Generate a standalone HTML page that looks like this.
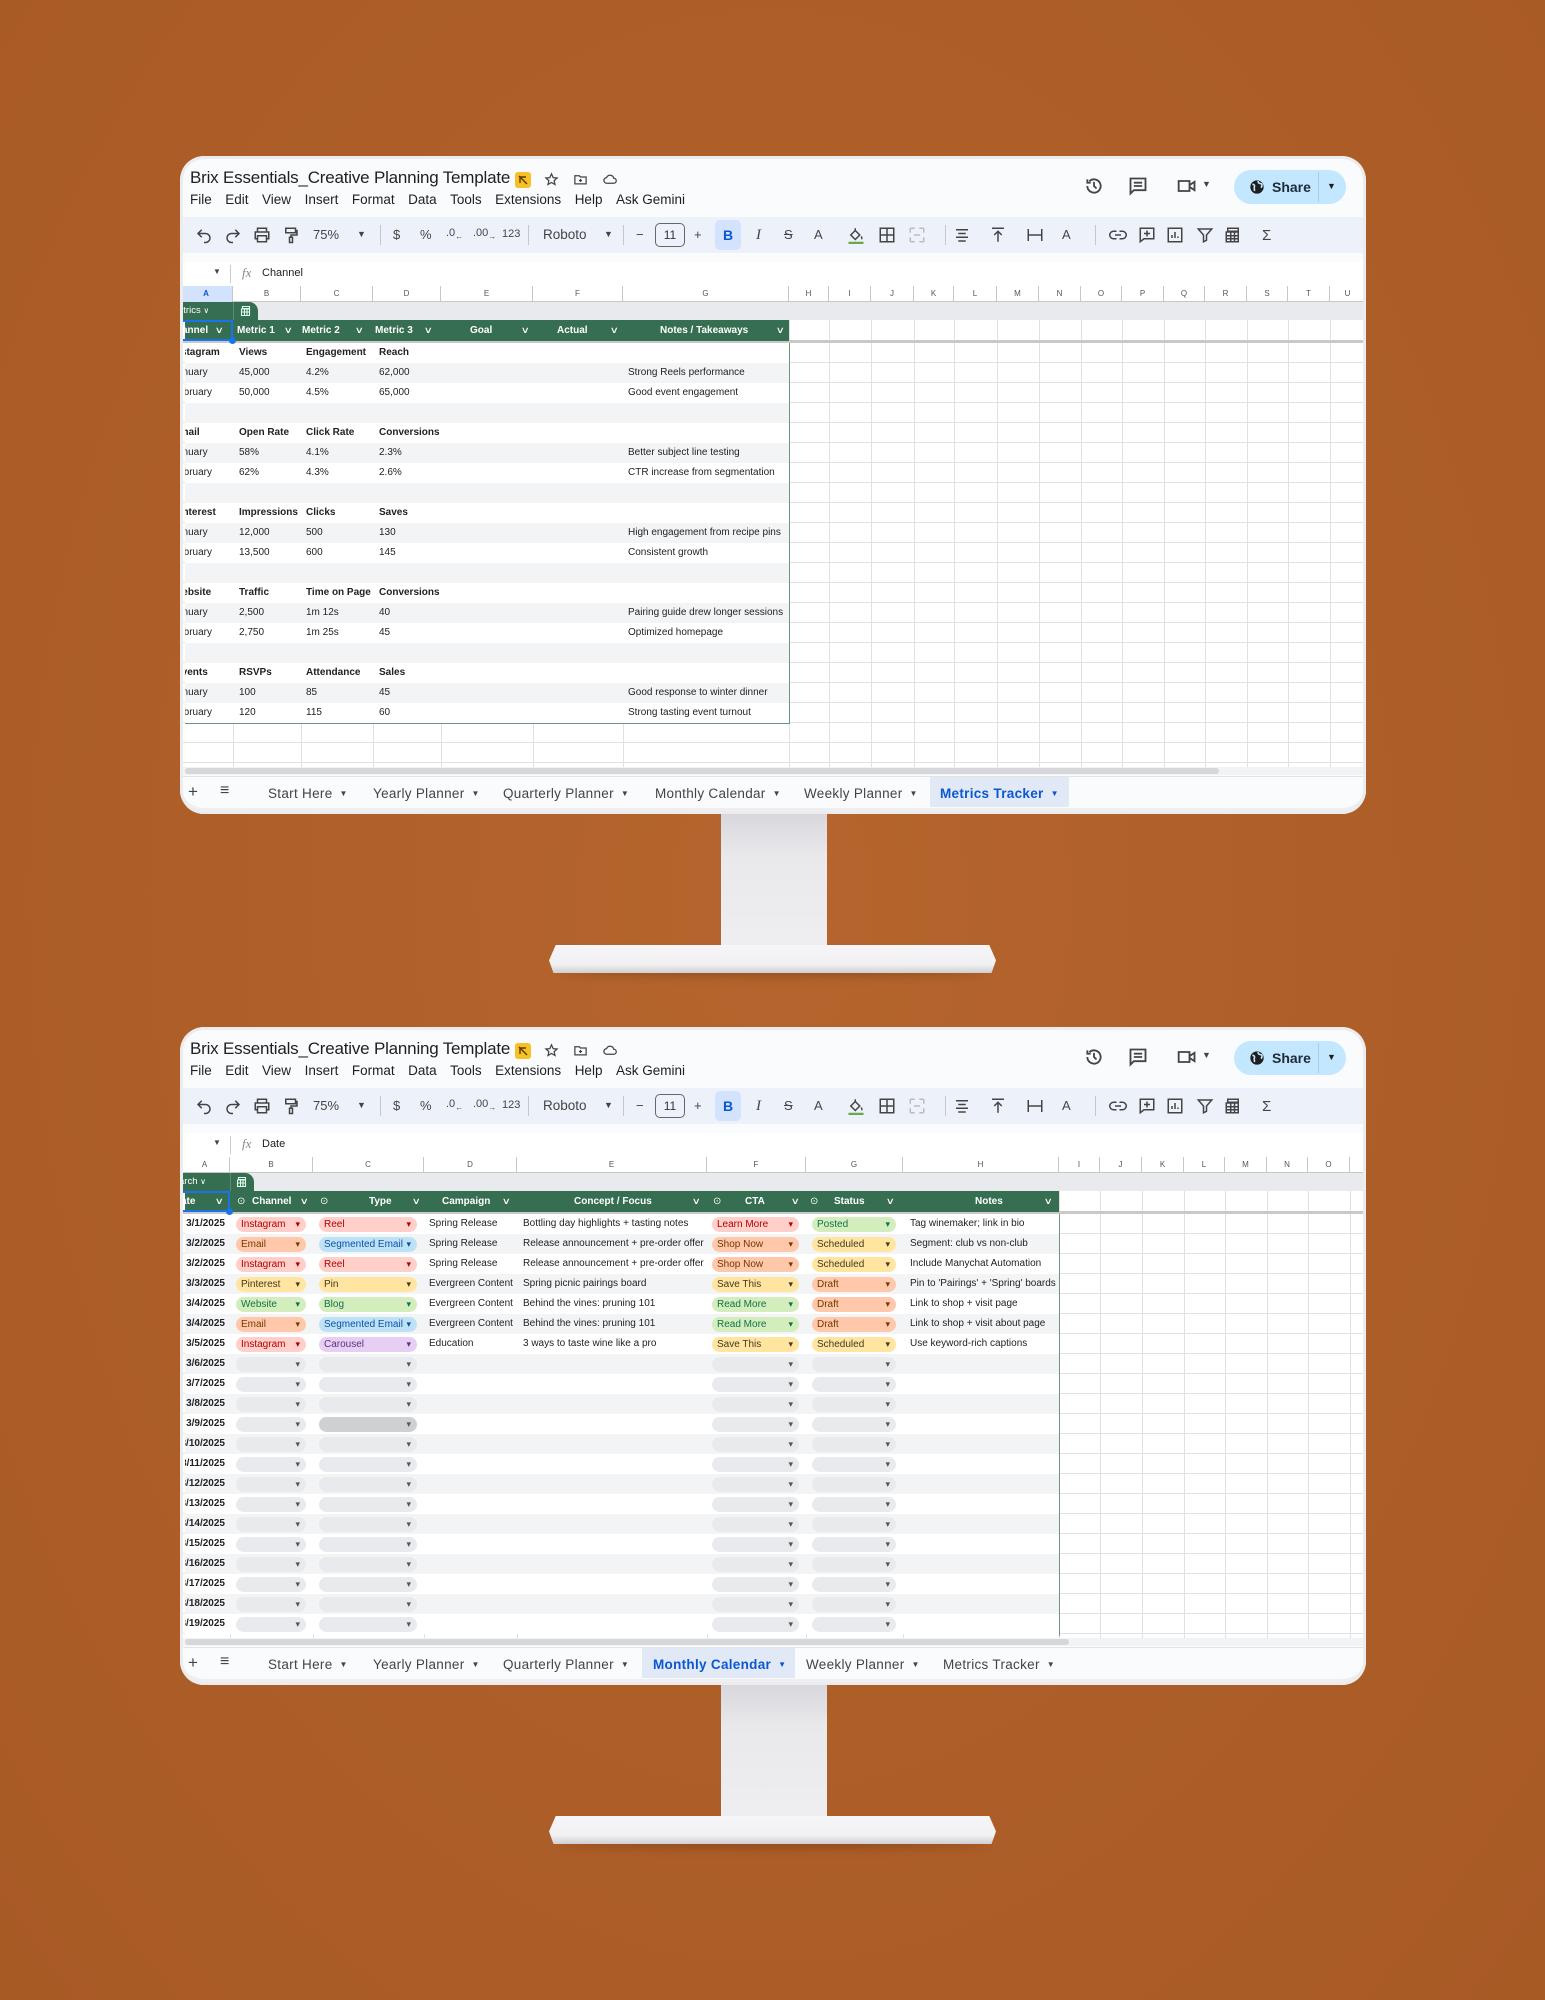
<!DOCTYPE html>
<html><head><meta charset="utf-8"><style>
*{box-sizing:border-box;margin:0;padding:0}
body{width:1545px;height:2000px;background:#b0612a;position:relative;overflow:hidden;font-family:"Liberation Sans",Arial,sans-serif;color:#1f1f1f}
.bgg{position:absolute;inset:0;background:radial-gradient(ellipse at 50% 45%,#b5652c 0%,#ad5e28 60%,#a85a25 100%)}
.m{position:absolute;left:180px;width:1186px;height:658px;background:#f9fbfd;border-radius:24px;overflow:hidden}
.m::after{content:"";position:absolute;inset:0;border-radius:24px;box-shadow:inset 0 0 0 3px #ececef,inset 0 -6px 0 #efeff1;pointer-events:none;z-index:50}
.ab{position:absolute}
.title{left:10px;top:12px;font-size:17px;color:#1f1f1f;letter-spacing:-.2px}
.menu{left:10px;top:36px;font-size:13.5px;color:#1f1f1f;display:flex;gap:13.5px}
.tb{left:0;right:0;top:61px;height:36px;background:#edf2fa}
.ti{position:absolute;top:9px;width:18px;height:18px}
.tt{position:absolute;top:10px;font-size:13px;color:#444}
svg{overflow:visible}
.fx{top:106px;left:0;right:0;height:24px;background:#fff}
.ch{top:130px;left:0;right:0;height:16px;background:#fff;border-bottom:1px solid #c7c7c7}
.cl{position:absolute;top:0;height:16px;font-size:8px;line-height:16px;text-align:center;color:#555;border-right:1px solid #c7c7c7}
.band{top:146px;left:0;right:0;height:18px;background:#e9eaee}
.grid{top:164px;left:0;right:0;height:447px;background:#fff}
.vl{position:absolute;top:130px;width:1px;height:481px;background:#e1e1e1}
.frz{top:184px;left:0;right:0;height:3px;background:#c9c9c9}
.gh{top:164px;height:21px;background:#356e51;color:#fff;font-size:10px;font-weight:bold;line-height:21px}
.gh span{position:absolute;top:0}
.gh i{position:absolute;top:0;font-style:normal;font-weight:normal;font-size:9px;transform:scaleX(1.4)}
.tbl{left:5px;top:187px;overflow:hidden}
.r{position:absolute;left:0;height:20px;line-height:20px;font-size:10px;color:#222;white-space:nowrap}
.r span{position:absolute;top:0}
.r.o{background:#f3f4f6}
.r.w{background:#fff}
.bd{font-weight:bold}
.sb{top:611px;left:0;right:0;height:8px;background:#f1f3f4}
.sbt{position:absolute;top:1px;height:6px;background:#d5d7da;border-radius:3px}
.tabs{top:620px;left:0;right:0;height:38px;background:#f9fbfd;border-top:1px solid #e3e3e3}
.tab{position:absolute;top:9px;font-size:13.5px;color:#444;letter-spacing:.3px;white-space:nowrap}
.tab b{font-size:8px;margin-left:7px;font-weight:normal;position:relative;top:-2px}
.act{position:absolute;top:0;height:30px;background:#e1e9f7}
.chip{position:absolute;top:2.5px;height:15px;line-height:15px;border-radius:8px;padding-left:5px;font-size:10px}
.chip::after{content:"▾";position:absolute;right:6px;top:0;font-size:9px}
.cr{background:#ffcfc9;color:#b10202}.co{background:#ffc8aa;color:#753800}.cy{background:#ffe5a0;color:#473821}
.cg{background:#d4edbc;color:#11734b}.cb{background:#bfe1f6;color:#0a53a8}.cp{background:#e6cff2;color:#5a3286}
.ce{background:#e8eaed;color:#555}
.neck{position:absolute;width:106px;background:linear-gradient(to bottom,#d6d6dc 0%,#e9e9ec 30%,#efeff1 100%)}
.base{position:absolute;left:549px;width:447px;height:28px;background:linear-gradient(#f6f6f8,#f1f1f3 70%,#cfcfd3 100%);clip-path:polygon(1.5% 0,98.5% 0,100% 55%,99% 100%,1% 100%,0 55%);border-radius:4px}
.bsh{position:absolute;left:560px;width:425px;height:10px;background:rgba(80,35,5,.35);filter:blur(5px);border-radius:50%}
</style></head><body>
<div class="bgg"></div>

<div class="bsh" style="top:966px"></div>
<div class="neck" style="left:721px;top:812px;height:146px"></div>
<div class="base" style="top:945px"></div>
<div class="bsh" style="top:1838px"></div>
<div class="neck" style="left:721px;top:1683px;height:146px"></div>
<div class="base" style="top:1816px"></div>

<!-- ================= MONITOR 1 ================= -->
<div class="m" style="top:156px">
 <div class="ab title">Brix Essentials_Creative Planning Template</div>
 <div class="ab" style="left:335px;top:16px;width:16px;height:16px;background:#f6c026;border-radius:3px"><svg width="16" height="16" viewBox="0 0 16 16"><path d="M4 4l8 8M5 11V5h6" stroke="#5a3b00" stroke-width="1.4" fill="none"/></svg></div>
 <svg class="ab" style="left:364px;top:16px" width="15" height="15" viewBox="0 0 24 24"><path d="M12 3l2.7 6 6.3.6-4.8 4.2 1.4 6.2L12 16.8 6.4 20l1.4-6.2L3 9.6l6.3-.6z" fill="none" stroke="#444" stroke-width="2"/></svg>
 <svg class="ab" style="left:393px;top:16px" width="15" height="15" viewBox="0 0 24 24"><path d="M3 6h7l2 2h9v11H3zM12 11v5M9.5 13.5h5" fill="none" stroke="#444" stroke-width="2"/></svg>
 <svg class="ab" style="left:422px;top:16px" width="16" height="15" viewBox="0 0 24 24"><path d="M7 18h11a4 4 0 000-8 6 6 0 00-11.5-1A4.5 4.5 0 007 18z" fill="none" stroke="#444" stroke-width="2"/></svg>
 <div class="ab menu"><span>File</span><span>Edit</span><span>View</span><span>Insert</span><span>Format</span><span>Data</span><span>Tools</span><span>Extensions</span><span>Help</span><span>Ask Gemini</span></div>
 <svg class="ab" style="left:904px;top:20px" width="20" height="20" viewBox="0 0 24 24"><path d="M4 12a8 8 0 102.5-5.8M4 4v4h4M12 7v5l3 3" fill="none" stroke="#444" stroke-width="2.2"/></svg>
 <svg class="ab" style="left:948px;top:20px" width="20" height="20" viewBox="0 0 24 24"><path d="M3 3h18v14H7l-4 4zM7 8h10M7 12h10" fill="none" stroke="#444" stroke-width="2.2"/></svg>
 <svg class="ab" style="left:997px;top:21px" width="20" height="18" viewBox="0 0 24 20"><path d="M2 4h13v12H2zM15 9l6-4v10l-6-4" fill="none" stroke="#444" stroke-width="2.2"/></svg>
 <div class="ab" style="left:1022px;top:23px;font-size:9px;color:#444">▼</div>
 <div class="ab" style="left:1054px;top:14px;width:112px;height:34px;background:#c2e7ff;border-radius:17px">
  <svg class="ab" style="left:15px;top:9px" width="16" height="16" viewBox="0 0 24 24"><circle cx="12" cy="12" r="10" fill="#1f1f1f"/><path d="M5 8c3 0 4 2 3 4s1 4 0 6M14 3c-1 3 2 4 4 4s2 4 0 6" stroke="#c2e7ff" stroke-width="2.5" fill="none"/></svg>
  <div class="ab" style="left:38px;top:9px;font-size:14px;font-weight:bold;color:#1f2a3a">Share</div>
  <div class="ab" style="left:84px;top:2px;width:1px;height:30px;background:#a9cde6"></div>
  <div class="ab" style="left:93px;top:11px;font-size:9px">▼</div>
 </div>
 <div class="ab tb">
  <svg class="ti" style="left:15px" viewBox="0 0 24 24"><path d="M9 15L4 10l5-5M4 10h10a6 6 0 010 12h-2" fill="none" stroke="#444" stroke-width="2"/></svg>
  <svg class="ti" style="left:44px" viewBox="0 0 24 24"><path d="M15 15l5-5-5-5M20 10H10a6 6 0 000 12h2" fill="none" stroke="#444" stroke-width="2"/></svg>
  <svg class="ti" style="left:73px" viewBox="0 0 24 24"><path d="M6 8V3h12v5M6 17H3V8h18v9h-3M6 13h12v8H6z" fill="none" stroke="#444" stroke-width="2"/></svg>
  <svg class="ti" style="left:102px" viewBox="0 0 24 24"><path d="M5 3h13v6H5zM18 6h2v6h-8v3M10 15h4v7h-4z" fill="none" stroke="#444" stroke-width="2"/></svg>
  <div class="tt" style="left:133px">75%</div><div class="tt" style="left:177px;font-size:9px;top:12px">▼</div>
  <div class="ab" style="left:200px;top:8px;width:1px;height:20px;background:#c7c7c7"></div>
  <div class="tt" style="left:213px">$</div><div class="tt" style="left:240px">%</div>
  <div class="tt" style="left:266px;font-size:11px">.0<sub style="font-size:8px">←</sub></div>
  <div class="tt" style="left:293px;font-size:11px">.00<sub style="font-size:8px">→</sub></div>
  <div class="tt" style="left:322px;font-size:11px;top:11px">123</div>
  <div class="ab" style="left:348px;top:8px;width:1px;height:20px;background:#c7c7c7"></div>
  <div class="tt" style="left:363px;font-size:13.5px">Roboto</div><div class="tt" style="left:424px;font-size:9px;top:12px">▼</div>
  <div class="ab" style="left:443px;top:8px;width:1px;height:20px;background:#c7c7c7"></div>
  <div class="tt" style="left:456px">−</div>
  <div class="ab" style="left:475px;top:6px;width:30px;height:24px;border:1px solid #666;border-radius:5px;font-size:12px;text-align:center;line-height:22px;color:#333">11</div>
  <div class="tt" style="left:514px">+</div>
  <div class="ab" style="left:535px;top:3px;width:26px;height:30px;background:#d3e3fd;border-radius:5px;font-size:14px;font-weight:bold;text-align:center;line-height:30px;color:#0b57d0">B</div>
  <div class="tt" style="left:576px;font-style:italic;font-size:15px;font-family:'Liberation Serif',serif">I</div>
  <div class="tt" style="left:604px;text-decoration:line-through">S</div>
  <div class="tt" style="left:634px">A</div>
  <svg class="ti" style="left:667px" viewBox="0 0 24 24"><path d="M5 12l6-6 6 6-6 6zM11 3v3M19 14c1 2 1 3 0 3" fill="none" stroke="#444" stroke-width="2"/><rect x="2" y="21" width="20" height="3" fill="#6aa84f"/></svg>
  <svg class="ti" style="left:698px" viewBox="0 0 24 24"><path d="M3 3h18v18H3zM12 3v18M3 12h18" fill="none" stroke="#444" stroke-width="2"/></svg>
  <svg class="ti" style="left:728px" viewBox="0 0 24 24"><path d="M3 3h6M15 3h6M3 21h6M15 21h6M3 3v6M21 3v6M3 15v6M21 15v6M8 12h8" fill="none" stroke="#bbb" stroke-width="2"/></svg>
  <div class="ab" style="left:765px;top:8px;width:1px;height:20px;background:#c7c7c7"></div>
  <svg class="ti" style="left:773px" viewBox="0 0 24 24"><path d="M4 5h16M7 10h10M4 15h16M7 20h10" fill="none" stroke="#444" stroke-width="2"/></svg>
  <svg class="ti" style="left:809px" viewBox="0 0 24 24"><path d="M4 3h16M12 21V8M7 12l5-5 5 5" fill="none" stroke="#444" stroke-width="2"/></svg>
  <svg class="ti" style="left:846px" viewBox="0 0 24 24"><path d="M3 4v16M21 4v16M3 12h18" fill="none" stroke="#444" stroke-width="2"/></svg>
  <div class="tt" style="left:882px">A</div>
  <div class="ab" style="left:915px;top:8px;width:1px;height:20px;background:#c7c7c7"></div>
  <svg class="ti" style="left:929px" viewBox="0 0 24 24"><path d="M10 7H6a5 5 0 000 10h4M14 7h4a5 5 0 010 10h-4M8 12h8" fill="none" stroke="#444" stroke-width="2"/></svg>
  <svg class="ti" style="left:958px" viewBox="0 0 24 24"><path d="M3 3h18v14H8l-5 4zM12 6v8M8 10h8" fill="none" stroke="#444" stroke-width="2"/></svg>
  <svg class="ti" style="left:986px" viewBox="0 0 24 24"><path d="M3 3h18v18H3zM8 16v-4M12 16V8M16 16v-2" fill="none" stroke="#444" stroke-width="2"/></svg>
  <svg class="ti" style="left:1016px" viewBox="0 0 24 24"><path d="M3 4h18l-7 8v7l-4 2v-9z" fill="none" stroke="#444" stroke-width="2"/></svg>
  <svg class="ti" style="left:1044px" viewBox="0 0 24 24"><path d="M5 3h14v4H5zM3 8h16v13H3zM3 13h16M3 17h16M9 8v13M14 8v13" fill="none" stroke="#444" stroke-width="2"/></svg>
  <div class="tt" style="left:1082px;font-size:15px">Σ</div>
 </div>
 <div class="ab fx">
  <div class="ab" style="left:33px;top:5px;font-size:8px;color:#444">▼</div>
  <div class="ab" style="left:50px;top:3px;width:1px;height:18px;background:#ccc"></div>
  <div class="ab" style="left:62px;top:3px;font-size:13px;font-style:italic;color:#888;font-family:'Liberation Serif',serif">fx</div>
  <div class="ab" style="left:82px;top:5px;font-size:11px;color:#222">Channel</div>
 </div>
 <div class="ab grid"></div>
 <div class="ab" style="left:0;right:0;top:187px;height:424px;background:repeating-linear-gradient(to bottom,#fff 0 19px,#e2e2e2 19px 20px)"></div>
 <div class="vl" style="left:53px"></div><div class="vl" style="left:121px"></div><div class="vl" style="left:193px"></div><div class="vl" style="left:261px"></div><div class="vl" style="left:353px"></div><div class="vl" style="left:443px"></div><div class="vl" style="left:609px"></div><div class="vl" style="left:649px"></div><div class="vl" style="left:691px"></div><div class="vl" style="left:734px"></div><div class="vl" style="left:774px"></div><div class="vl" style="left:817px"></div><div class="vl" style="left:859px"></div><div class="vl" style="left:901px"></div><div class="vl" style="left:942px"></div><div class="vl" style="left:984px"></div><div class="vl" style="left:1025px"></div><div class="vl" style="left:1067px"></div><div class="vl" style="left:1108px"></div><div class="vl" style="left:1150px"></div>
 <div class="ab ch">
  <div class="cl" style="left:0;width:53px;background:#d3e3fd;font-weight:bold;color:#0b57d0">A</div><div class="cl" style="left:53px;width:68px">B</div><div class="cl" style="left:121px;width:72px">C</div><div class="cl" style="left:193px;width:68px">D</div><div class="cl" style="left:261px;width:92px">E</div><div class="cl" style="left:353px;width:90px">F</div><div class="cl" style="left:443px;width:166px">G</div><div class="cl" style="left:609px;width:40px">H</div><div class="cl" style="left:649px;width:42px">I</div><div class="cl" style="left:691px;width:43px">J</div><div class="cl" style="left:734px;width:40px">K</div><div class="cl" style="left:774px;width:43px">L</div><div class="cl" style="left:817px;width:42px">M</div><div class="cl" style="left:859px;width:42px">N</div><div class="cl" style="left:901px;width:41px">O</div><div class="cl" style="left:942px;width:42px">P</div><div class="cl" style="left:984px;width:41px">Q</div><div class="cl" style="left:1025px;width:42px">R</div><div class="cl" style="left:1067px;width:41px">S</div><div class="cl" style="left:1108px;width:42px">T</div><div class="cl" style="left:1150px;width:36px">U</div>
 </div>
 <div class="ab band">
  <div class="ab" style="left:0;top:0;width:78px;height:18px;background:#356e51;border-radius:0 9px 0 0"></div>
  <div class="ab" style="left:53px;top:0;width:1px;height:18px;background:#5d8a72"></div>
  <div class="ab" style="left:-2px;top:3px;font-size:9.5px;color:#fff">etrics <span style="font-size:8px">∨</span></div>
  <svg class="ab" style="left:60px;top:3px" width="12" height="12" viewBox="0 0 24 24"><path d="M5 3h14v4H5zM3 8h16v13H3zM3 14h16M9 8v13M14 8v13" fill="none" stroke="#dfe" stroke-width="2.2"/></svg>
 </div>
 <div class="ab frz"></div>
 <div class="ab gh" style="left:5px;width:604px">
  <span style="left:-3px">annel</span><i style="left:31px">∨</i>
  <span style="left:52px">Metric 1</span><i style="left:100px">∨</i>
  <span style="left:117px">Metric 2</span><i style="left:171px">∨</i>
  <span style="left:190px">Metric 3</span><i style="left:240px">∨</i>
  <span style="left:285px">Goal</span><i style="left:337px">∨</i>
  <span style="left:372px">Actual</span><i style="left:426px">∨</i>
  <span style="left:475px">Notes / Takeaways</span><i style="left:592px">∨</i>
  <div class="ab" style="left:-5px;top:0;width:53px;height:21px;border:2px solid #1a73e8"></div>
  <div class="ab" style="left:44px;top:17px;width:7px;height:7px;border-radius:50%;background:#1a73e8;z-index:3"></div>
 </div>
 <div class="ab tbl" style="width:605px;height:381px;border-right:1px solid #6e9583;border-bottom:1px solid #6e9583">
  <div class="r w bd" style="top:0;width:604px"><span style="left:-13px">Instagram</span><span style="left:54px">Views</span><span style="left:121px">Engagement</span><span style="left:194px">Reach</span></div>
  <div class="r o" style="top:20px;width:604px"><span style="left:-13px">January</span><span style="left:54px">45,000</span><span style="left:121px">4.2%</span><span style="left:194px">62,000</span><span style="left:443px">Strong Reels performance</span></div>
  <div class="r w" style="top:40px;width:604px"><span style="left:-13px">February</span><span style="left:54px">50,000</span><span style="left:121px">4.5%</span><span style="left:194px">65,000</span><span style="left:443px">Good event engagement</span></div>
  <div class="r o" style="top:60px;width:604px"></div>
  <div class="r w bd" style="top:80px;width:604px"><span style="left:-12px">Email</span><span style="left:54px">Open Rate</span><span style="left:121px">Click Rate</span><span style="left:194px">Conversions</span></div>
  <div class="r o" style="top:100px;width:604px"><span style="left:-13px">January</span><span style="left:54px">58%</span><span style="left:121px">4.1%</span><span style="left:194px">2.3%</span><span style="left:443px">Better subject line testing</span></div>
  <div class="r w" style="top:120px;width:604px"><span style="left:-13px">February</span><span style="left:54px">62%</span><span style="left:121px">4.3%</span><span style="left:194px">2.6%</span><span style="left:443px">CTR increase from segmentation</span></div>
  <div class="r o" style="top:140px;width:604px"></div>
  <div class="r w bd" style="top:160px;width:604px"><span style="left:-12px">Pinterest</span><span style="left:54px">Impressions</span><span style="left:121px">Clicks</span><span style="left:194px">Saves</span></div>
  <div class="r o" style="top:180px;width:604px"><span style="left:-13px">January</span><span style="left:54px">12,000</span><span style="left:121px">500</span><span style="left:194px">130</span><span style="left:443px">High engagement from recipe pins</span></div>
  <div class="r w" style="top:200px;width:604px"><span style="left:-13px">February</span><span style="left:54px">13,500</span><span style="left:121px">600</span><span style="left:194px">145</span><span style="left:443px">Consistent growth</span></div>
  <div class="r o" style="top:220px;width:604px"></div>
  <div class="r w bd" style="top:240px;width:604px"><span style="left:-12px">Website</span><span style="left:54px">Traffic</span><span style="left:121px">Time on Page</span><span style="left:194px">Conversions</span></div>
  <div class="r o" style="top:260px;width:604px"><span style="left:-13px">January</span><span style="left:54px">2,500</span><span style="left:121px">1m 12s</span><span style="left:194px">40</span><span style="left:443px">Pairing guide drew longer sessions</span></div>
  <div class="r w" style="top:280px;width:604px"><span style="left:-13px">February</span><span style="left:54px">2,750</span><span style="left:121px">1m 25s</span><span style="left:194px">45</span><span style="left:443px">Optimized homepage</span></div>
  <div class="r o" style="top:300px;width:604px"></div>
  <div class="r w bd" style="top:320px;width:604px"><span style="left:-10px">Events</span><span style="left:54px">RSVPs</span><span style="left:121px">Attendance</span><span style="left:194px">Sales</span></div>
  <div class="r o" style="top:340px;width:604px"><span style="left:-13px">January</span><span style="left:54px">100</span><span style="left:121px">85</span><span style="left:194px">45</span><span style="left:443px">Good response to winter dinner</span></div>
  <div class="r w" style="top:360px;width:604px"><span style="left:-13px">February</span><span style="left:54px">120</span><span style="left:121px">115</span><span style="left:194px">60</span><span style="left:443px">Strong tasting event turnout</span></div>
 </div>
 <div class="ab sb"><div class="sbt" style="left:5px;width:1034px"></div></div>
 <div class="ab tabs">
  <div class="act" style="left:750px;width:139px"></div>
  <div class="tab" style="left:8px;font-size:17px;top:5px">+</div>
  <div class="tab" style="left:40px;font-size:16px;top:5px">≡</div>
  <div class="tab" style="left:88px">Start Here<b>▼</b></div>
  <div class="tab" style="left:193px">Yearly Planner<b>▼</b></div>
  <div class="tab" style="left:323px">Quarterly Planner<b>▼</b></div>
  <div class="tab" style="left:475px">Monthly Calendar<b>▼</b></div>
  <div class="tab" style="left:624px">Weekly Planner<b>▼</b></div>
  <div class="tab" style="left:760px;color:#0b57d0;font-weight:bold">Metrics Tracker<b>▼</b></div>
 </div>
</div>

<!-- ================= MONITOR 2 ================= -->
<div class="m" style="top:1027px">
 <div class="ab title">Brix Essentials_Creative Planning Template</div>
 <div class="ab" style="left:335px;top:16px;width:16px;height:16px;background:#f6c026;border-radius:3px"><svg width="16" height="16" viewBox="0 0 16 16"><path d="M4 4l8 8M5 11V5h6" stroke="#5a3b00" stroke-width="1.4" fill="none"/></svg></div>
 <svg class="ab" style="left:364px;top:16px" width="15" height="15" viewBox="0 0 24 24"><path d="M12 3l2.7 6 6.3.6-4.8 4.2 1.4 6.2L12 16.8 6.4 20l1.4-6.2L3 9.6l6.3-.6z" fill="none" stroke="#444" stroke-width="2"/></svg>
 <svg class="ab" style="left:393px;top:16px" width="15" height="15" viewBox="0 0 24 24"><path d="M3 6h7l2 2h9v11H3zM12 11v5M9.5 13.5h5" fill="none" stroke="#444" stroke-width="2"/></svg>
 <svg class="ab" style="left:422px;top:16px" width="16" height="15" viewBox="0 0 24 24"><path d="M7 18h11a4 4 0 000-8 6 6 0 00-11.5-1A4.5 4.5 0 007 18z" fill="none" stroke="#444" stroke-width="2"/></svg>
 <div class="ab menu"><span>File</span><span>Edit</span><span>View</span><span>Insert</span><span>Format</span><span>Data</span><span>Tools</span><span>Extensions</span><span>Help</span><span>Ask Gemini</span></div>
 <svg class="ab" style="left:904px;top:20px" width="20" height="20" viewBox="0 0 24 24"><path d="M4 12a8 8 0 102.5-5.8M4 4v4h4M12 7v5l3 3" fill="none" stroke="#444" stroke-width="2.2"/></svg>
 <svg class="ab" style="left:948px;top:20px" width="20" height="20" viewBox="0 0 24 24"><path d="M3 3h18v14H7l-4 4zM7 8h10M7 12h10" fill="none" stroke="#444" stroke-width="2.2"/></svg>
 <svg class="ab" style="left:997px;top:21px" width="20" height="18" viewBox="0 0 24 20"><path d="M2 4h13v12H2zM15 9l6-4v10l-6-4" fill="none" stroke="#444" stroke-width="2.2"/></svg>
 <div class="ab" style="left:1022px;top:23px;font-size:9px;color:#444">▼</div>
 <div class="ab" style="left:1054px;top:14px;width:112px;height:34px;background:#c2e7ff;border-radius:17px">
  <svg class="ab" style="left:15px;top:9px" width="16" height="16" viewBox="0 0 24 24"><circle cx="12" cy="12" r="10" fill="#1f1f1f"/><path d="M5 8c3 0 4 2 3 4s1 4 0 6M14 3c-1 3 2 4 4 4s2 4 0 6" stroke="#c2e7ff" stroke-width="2.5" fill="none"/></svg>
  <div class="ab" style="left:38px;top:9px;font-size:14px;font-weight:bold;color:#1f2a3a">Share</div>
  <div class="ab" style="left:84px;top:2px;width:1px;height:30px;background:#a9cde6"></div>
  <div class="ab" style="left:93px;top:11px;font-size:9px">▼</div>
 </div>
 <div class="ab tb">
  <svg class="ti" style="left:15px" viewBox="0 0 24 24"><path d="M9 15L4 10l5-5M4 10h10a6 6 0 010 12h-2" fill="none" stroke="#444" stroke-width="2"/></svg>
  <svg class="ti" style="left:44px" viewBox="0 0 24 24"><path d="M15 15l5-5-5-5M20 10H10a6 6 0 000 12h2" fill="none" stroke="#444" stroke-width="2"/></svg>
  <svg class="ti" style="left:73px" viewBox="0 0 24 24"><path d="M6 8V3h12v5M6 17H3V8h18v9h-3M6 13h12v8H6z" fill="none" stroke="#444" stroke-width="2"/></svg>
  <svg class="ti" style="left:102px" viewBox="0 0 24 24"><path d="M5 3h13v6H5zM18 6h2v6h-8v3M10 15h4v7h-4z" fill="none" stroke="#444" stroke-width="2"/></svg>
  <div class="tt" style="left:133px">75%</div><div class="tt" style="left:177px;font-size:9px;top:12px">▼</div>
  <div class="ab" style="left:200px;top:8px;width:1px;height:20px;background:#c7c7c7"></div>
  <div class="tt" style="left:213px">$</div><div class="tt" style="left:240px">%</div>
  <div class="tt" style="left:266px;font-size:11px">.0<sub style="font-size:8px">←</sub></div>
  <div class="tt" style="left:293px;font-size:11px">.00<sub style="font-size:8px">→</sub></div>
  <div class="tt" style="left:322px;font-size:11px;top:11px">123</div>
  <div class="ab" style="left:348px;top:8px;width:1px;height:20px;background:#c7c7c7"></div>
  <div class="tt" style="left:363px;font-size:13.5px">Roboto</div><div class="tt" style="left:424px;font-size:9px;top:12px">▼</div>
  <div class="ab" style="left:443px;top:8px;width:1px;height:20px;background:#c7c7c7"></div>
  <div class="tt" style="left:456px">−</div>
  <div class="ab" style="left:475px;top:6px;width:30px;height:24px;border:1px solid #666;border-radius:5px;font-size:12px;text-align:center;line-height:22px;color:#333">11</div>
  <div class="tt" style="left:514px">+</div>
  <div class="ab" style="left:535px;top:3px;width:26px;height:30px;background:#d3e3fd;border-radius:5px;font-size:14px;font-weight:bold;text-align:center;line-height:30px;color:#0b57d0">B</div>
  <div class="tt" style="left:576px;font-style:italic;font-size:15px;font-family:'Liberation Serif',serif">I</div>
  <div class="tt" style="left:604px;text-decoration:line-through">S</div>
  <div class="tt" style="left:634px">A</div>
  <svg class="ti" style="left:667px" viewBox="0 0 24 24"><path d="M5 12l6-6 6 6-6 6zM11 3v3M19 14c1 2 1 3 0 3" fill="none" stroke="#444" stroke-width="2"/><rect x="2" y="21" width="20" height="3" fill="#6aa84f"/></svg>
  <svg class="ti" style="left:698px" viewBox="0 0 24 24"><path d="M3 3h18v18H3zM12 3v18M3 12h18" fill="none" stroke="#444" stroke-width="2"/></svg>
  <svg class="ti" style="left:728px" viewBox="0 0 24 24"><path d="M3 3h6M15 3h6M3 21h6M15 21h6M3 3v6M21 3v6M3 15v6M21 15v6M8 12h8" fill="none" stroke="#bbb" stroke-width="2"/></svg>
  <div class="ab" style="left:765px;top:8px;width:1px;height:20px;background:#c7c7c7"></div>
  <svg class="ti" style="left:773px" viewBox="0 0 24 24"><path d="M4 5h16M7 10h10M4 15h16M7 20h10" fill="none" stroke="#444" stroke-width="2"/></svg>
  <svg class="ti" style="left:809px" viewBox="0 0 24 24"><path d="M4 3h16M12 21V8M7 12l5-5 5 5" fill="none" stroke="#444" stroke-width="2"/></svg>
  <svg class="ti" style="left:846px" viewBox="0 0 24 24"><path d="M3 4v16M21 4v16M3 12h18" fill="none" stroke="#444" stroke-width="2"/></svg>
  <div class="tt" style="left:882px">A</div>
  <div class="ab" style="left:915px;top:8px;width:1px;height:20px;background:#c7c7c7"></div>
  <svg class="ti" style="left:929px" viewBox="0 0 24 24"><path d="M10 7H6a5 5 0 000 10h4M14 7h4a5 5 0 010 10h-4M8 12h8" fill="none" stroke="#444" stroke-width="2"/></svg>
  <svg class="ti" style="left:958px" viewBox="0 0 24 24"><path d="M3 3h18v14H8l-5 4zM12 6v8M8 10h8" fill="none" stroke="#444" stroke-width="2"/></svg>
  <svg class="ti" style="left:986px" viewBox="0 0 24 24"><path d="M3 3h18v18H3zM8 16v-4M12 16V8M16 16v-2" fill="none" stroke="#444" stroke-width="2"/></svg>
  <svg class="ti" style="left:1016px" viewBox="0 0 24 24"><path d="M3 4h18l-7 8v7l-4 2v-9z" fill="none" stroke="#444" stroke-width="2"/></svg>
  <svg class="ti" style="left:1044px" viewBox="0 0 24 24"><path d="M5 3h14v4H5zM3 8h16v13H3zM3 13h16M3 17h16M9 8v13M14 8v13" fill="none" stroke="#444" stroke-width="2"/></svg>
  <div class="tt" style="left:1082px;font-size:15px">Σ</div>
 </div>
 <div class="ab fx">
  <div class="ab" style="left:33px;top:5px;font-size:8px;color:#444">▼</div>
  <div class="ab" style="left:50px;top:3px;width:1px;height:18px;background:#ccc"></div>
  <div class="ab" style="left:62px;top:3px;font-size:13px;font-style:italic;color:#888;font-family:'Liberation Serif',serif">fx</div>
  <div class="ab" style="left:82px;top:5px;font-size:11px;color:#222">Date</div>
 </div>
 <div class="ab grid"></div>
 <div class="ab" style="left:0;right:0;top:187px;height:424px;background:repeating-linear-gradient(to bottom,#fff 0 19px,#e2e2e2 19px 20px)"></div>
 <div class="vl" style="left:50px"></div><div class="vl" style="left:133px"></div><div class="vl" style="left:244px"></div><div class="vl" style="left:337px"></div><div class="vl" style="left:527px"></div><div class="vl" style="left:626px"></div><div class="vl" style="left:723px"></div><div class="vl" style="left:879px"></div><div class="vl" style="left:920px"></div><div class="vl" style="left:962px"></div><div class="vl" style="left:1004px"></div><div class="vl" style="left:1045px"></div><div class="vl" style="left:1087px"></div><div class="vl" style="left:1128px"></div><div class="vl" style="left:1170px"></div>
 <div class="ab ch">
  <div class="cl" style="left:0;width:50px">A</div><div class="cl" style="left:50px;width:83px">B</div><div class="cl" style="left:133px;width:111px">C</div><div class="cl" style="left:244px;width:93px">D</div><div class="cl" style="left:337px;width:190px">E</div><div class="cl" style="left:527px;width:99px">F</div><div class="cl" style="left:626px;width:97px">G</div><div class="cl" style="left:723px;width:156px">H</div><div class="cl" style="left:879px;width:41px">I</div><div class="cl" style="left:920px;width:42px">J</div><div class="cl" style="left:962px;width:42px">K</div><div class="cl" style="left:1004px;width:41px">L</div><div class="cl" style="left:1045px;width:42px">M</div><div class="cl" style="left:1087px;width:41px">N</div><div class="cl" style="left:1128px;width:42px">O</div><div class="cl" style="left:1170px;width:16px"></div>
 </div>
 <div class="ab band">
  <div class="ab" style="left:0;top:0;width:74px;height:18px;background:#356e51;border-radius:0 9px 0 0"></div>
  <div class="ab" style="left:50px;top:0;width:1px;height:18px;background:#5d8a72"></div>
  <div class="ab" style="left:-1px;top:3px;font-size:9.5px;color:#fff">arch <span style="font-size:8px">∨</span></div>
  <svg class="ab" style="left:56px;top:3px" width="12" height="12" viewBox="0 0 24 24"><path d="M5 3h14v4H5zM3 8h16v13H3zM3 14h16M9 8v13M14 8v13" fill="none" stroke="#dfe" stroke-width="2.2"/></svg>
 </div>
 <div class="ab frz"></div>
 <div class="ab gh" style="left:5px;width:874px">
  <span style="left:-4px">ate</span><i style="left:31px">∨</i>
  <span style="left:52px;font-weight:normal">⊙</span><span style="left:67px">Channel</span><i style="left:116px">∨</i>
  <span style="left:135px;font-weight:normal">⊙</span><span style="left:184px">Type</span><i style="left:228px">∨</i>
  <span style="left:257px">Campaign</span><i style="left:318px">∨</i>
  <span style="left:389px">Concept / Focus</span><i style="left:508px">∨</i>
  <span style="left:528px;font-weight:normal">⊙</span><span style="left:560px">CTA</span><i style="left:607px">∨</i>
  <span style="left:625px;font-weight:normal">⊙</span><span style="left:649px">Status</span><i style="left:702px">∨</i>
  <span style="left:790px">Notes</span><i style="left:860px">∨</i>
  <div class="ab" style="left:-5px;top:0;width:50px;height:21px;border:2px solid #1a73e8"></div>
  <div class="ab" style="left:41px;top:17px;width:7px;height:7px;border-radius:50%;background:#1a73e8;z-index:3"></div>
 </div>
 <div class="ab tbl" style="width:875px;height:422px;border-right:1px solid #6e9583">
  <div class="r w" style="top:0;width:874px"><span class="bd" style="right:834px">3/1/2025</span><div class="chip cr" style="left:51px;width:70px">Instagram</div><div class="chip cr" style="left:134px;width:98px">Reel</div><span style="left:244px">Spring Release</span><span style="left:338px">Bottling day highlights + tasting notes</span><div class="chip cr" style="left:527px;width:87px">Learn More</div><div class="chip cg" style="left:627px;width:84px">Posted</div><span style="left:725px">Tag winemaker; link in bio</span></div>
  <div class="r o" style="top:20px;width:874px"><span class="bd" style="right:834px">3/2/2025</span><div class="chip co" style="left:51px;width:70px">Email</div><div class="chip cb" style="left:134px;width:98px">Segmented Email</div><span style="left:244px">Spring Release</span><span style="left:338px">Release announcement + pre-order offer</span><div class="chip co" style="left:527px;width:87px">Shop Now</div><div class="chip cy" style="left:627px;width:84px">Scheduled</div><span style="left:725px">Segment: club vs non-club</span></div>
  <div class="r w" style="top:40px;width:874px"><span class="bd" style="right:834px">3/2/2025</span><div class="chip cr" style="left:51px;width:70px">Instagram</div><div class="chip cr" style="left:134px;width:98px">Reel</div><span style="left:244px">Spring Release</span><span style="left:338px">Release announcement + pre-order offer</span><div class="chip co" style="left:527px;width:87px">Shop Now</div><div class="chip cy" style="left:627px;width:84px">Scheduled</div><span style="left:725px">Include Manychat Automation</span></div>
  <div class="r o" style="top:60px;width:874px"><span class="bd" style="right:834px">3/3/2025</span><div class="chip cy" style="left:51px;width:70px">Pinterest</div><div class="chip cy" style="left:134px;width:98px">Pin</div><span style="left:244px">Evergreen Content</span><span style="left:338px">Spring picnic pairings board</span><div class="chip cy" style="left:527px;width:87px">Save This</div><div class="chip co" style="left:627px;width:84px">Draft</div><span style="left:725px">Pin to 'Pairings' + 'Spring' boards</span></div>
  <div class="r w" style="top:80px;width:874px"><span class="bd" style="right:834px">3/4/2025</span><div class="chip cg" style="left:51px;width:70px">Website</div><div class="chip cg" style="left:134px;width:98px">Blog</div><span style="left:244px">Evergreen Content</span><span style="left:338px">Behind the vines: pruning 101</span><div class="chip cg" style="left:527px;width:87px">Read More</div><div class="chip co" style="left:627px;width:84px">Draft</div><span style="left:725px">Link to shop + visit page</span></div>
  <div class="r o" style="top:100px;width:874px"><span class="bd" style="right:834px">3/4/2025</span><div class="chip co" style="left:51px;width:70px">Email</div><div class="chip cb" style="left:134px;width:98px">Segmented Email</div><span style="left:244px">Evergreen Content</span><span style="left:338px">Behind the vines: pruning 101</span><div class="chip cg" style="left:527px;width:87px">Read More</div><div class="chip co" style="left:627px;width:84px">Draft</div><span style="left:725px">Link to shop + visit about page</span></div>
  <div class="r w" style="top:120px;width:874px"><span class="bd" style="right:834px">3/5/2025</span><div class="chip cr" style="left:51px;width:70px">Instagram</div><div class="chip cp" style="left:134px;width:98px">Carousel</div><span style="left:244px">Education</span><span style="left:338px">3 ways to taste wine like a pro</span><div class="chip cy" style="left:527px;width:87px">Save This</div><div class="chip cy" style="left:627px;width:84px">Scheduled</div><span style="left:725px">Use keyword-rich captions</span></div>
  <div class="r o" style="top:140px;width:874px"><span class="bd" style="right:834px">3/6/2025</span><div class="chip ce" style="left:51px;width:70px"></div><div class="chip ce" style="left:134px;width:98px"></div><div class="chip ce" style="left:527px;width:87px"></div><div class="chip ce" style="left:627px;width:84px"></div></div>
  <div class="r w" style="top:160px;width:874px"><span class="bd" style="right:834px">3/7/2025</span><div class="chip ce" style="left:51px;width:70px"></div><div class="chip ce" style="left:134px;width:98px"></div><div class="chip ce" style="left:527px;width:87px"></div><div class="chip ce" style="left:627px;width:84px"></div></div>
  <div class="r o" style="top:180px;width:874px"><span class="bd" style="right:834px">3/8/2025</span><div class="chip ce" style="left:51px;width:70px"></div><div class="chip ce" style="left:134px;width:98px"></div><div class="chip ce" style="left:527px;width:87px"></div><div class="chip ce" style="left:627px;width:84px"></div></div>
  <div class="r w" style="top:200px;width:874px"><span class="bd" style="right:834px">3/9/2025</span><div class="chip ce" style="left:51px;width:70px"></div><div class="chip ce" style="left:134px;width:98px;background:#cfd0d2"></div><div class="chip ce" style="left:527px;width:87px"></div><div class="chip ce" style="left:627px;width:84px"></div></div>
  <div class="r o" style="top:220px;width:874px"><span class="bd" style="right:834px">3/10/2025</span><div class="chip ce" style="left:51px;width:70px"></div><div class="chip ce" style="left:134px;width:98px"></div><div class="chip ce" style="left:527px;width:87px"></div><div class="chip ce" style="left:627px;width:84px"></div></div>
  <div class="r w" style="top:240px;width:874px"><span class="bd" style="right:834px">3/11/2025</span><div class="chip ce" style="left:51px;width:70px"></div><div class="chip ce" style="left:134px;width:98px"></div><div class="chip ce" style="left:527px;width:87px"></div><div class="chip ce" style="left:627px;width:84px"></div></div>
  <div class="r o" style="top:260px;width:874px"><span class="bd" style="right:834px">3/12/2025</span><div class="chip ce" style="left:51px;width:70px"></div><div class="chip ce" style="left:134px;width:98px"></div><div class="chip ce" style="left:527px;width:87px"></div><div class="chip ce" style="left:627px;width:84px"></div></div>
  <div class="r w" style="top:280px;width:874px"><span class="bd" style="right:834px">3/13/2025</span><div class="chip ce" style="left:51px;width:70px"></div><div class="chip ce" style="left:134px;width:98px"></div><div class="chip ce" style="left:527px;width:87px"></div><div class="chip ce" style="left:627px;width:84px"></div></div>
  <div class="r o" style="top:300px;width:874px"><span class="bd" style="right:834px">3/14/2025</span><div class="chip ce" style="left:51px;width:70px"></div><div class="chip ce" style="left:134px;width:98px"></div><div class="chip ce" style="left:527px;width:87px"></div><div class="chip ce" style="left:627px;width:84px"></div></div>
  <div class="r w" style="top:320px;width:874px"><span class="bd" style="right:834px">3/15/2025</span><div class="chip ce" style="left:51px;width:70px"></div><div class="chip ce" style="left:134px;width:98px"></div><div class="chip ce" style="left:527px;width:87px"></div><div class="chip ce" style="left:627px;width:84px"></div></div>
  <div class="r o" style="top:340px;width:874px"><span class="bd" style="right:834px">3/16/2025</span><div class="chip ce" style="left:51px;width:70px"></div><div class="chip ce" style="left:134px;width:98px"></div><div class="chip ce" style="left:527px;width:87px"></div><div class="chip ce" style="left:627px;width:84px"></div></div>
  <div class="r w" style="top:360px;width:874px"><span class="bd" style="right:834px">3/17/2025</span><div class="chip ce" style="left:51px;width:70px"></div><div class="chip ce" style="left:134px;width:98px"></div><div class="chip ce" style="left:527px;width:87px"></div><div class="chip ce" style="left:627px;width:84px"></div></div>
  <div class="r o" style="top:380px;width:874px"><span class="bd" style="right:834px">3/18/2025</span><div class="chip ce" style="left:51px;width:70px"></div><div class="chip ce" style="left:134px;width:98px"></div><div class="chip ce" style="left:527px;width:87px"></div><div class="chip ce" style="left:627px;width:84px"></div></div>
  <div class="r w" style="top:400px;width:874px"><span class="bd" style="right:834px">3/19/2025</span><div class="chip ce" style="left:51px;width:70px"></div><div class="chip ce" style="left:134px;width:98px"></div><div class="chip ce" style="left:527px;width:87px"></div><div class="chip ce" style="left:627px;width:84px"></div></div>
 </div>
 <div class="ab sb"><div class="sbt" style="left:5px;width:884px"></div></div>
 <div class="ab tabs">
  <div class="act" style="left:462px;width:153px"></div>
  <div class="tab" style="left:8px;font-size:17px;top:5px">+</div>
  <div class="tab" style="left:40px;font-size:16px;top:5px">≡</div>
  <div class="tab" style="left:88px">Start Here<b>▼</b></div>
  <div class="tab" style="left:193px">Yearly Planner<b>▼</b></div>
  <div class="tab" style="left:323px">Quarterly Planner<b>▼</b></div>
  <div class="tab" style="left:473px;color:#0b57d0;font-weight:bold">Monthly Calendar<b>▼</b></div>
  <div class="tab" style="left:626px">Weekly Planner<b>▼</b></div>
  <div class="tab" style="left:763px">Metrics Tracker<b>▼</b></div>
 </div>
</div>
</body></html>
